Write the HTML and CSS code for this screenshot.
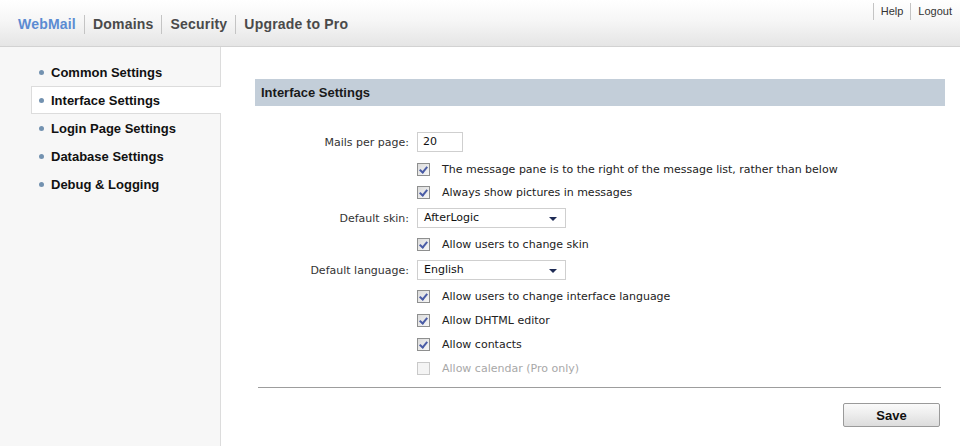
FILE: index.html
```html
<!DOCTYPE html>
<html>
<head>
<meta charset="utf-8">
<link rel="stylesheet" href="styles.css">
</head>
<body>
<header class="header">
  <nav class="mainnav">
    <a class="nav-item active">WebMail</a>
    <a class="nav-item">Domains</a>
    <a class="nav-item">Security</a>
    <a class="nav-item">Upgrade to Pro</a>
  </nav>
  <div class="toplinks">
    <a class="toplink">Help</a>
    <a class="toplink">Logout</a>
  </div>
</header>
<div class="main">
  <aside class="sidebar">
    <ul class="menu">
      <li class="menu-item"><span class="bullet"></span>Common Settings</li>
      <li class="menu-item selected"><span class="bullet"></span>Interface Settings</li>
      <li class="menu-item"><span class="bullet"></span>Login Page Settings</li>
      <li class="menu-item"><span class="bullet"></span>Database Settings</li>
      <li class="menu-item"><span class="bullet"></span>Debug &amp; Logging</li>
    </ul>
  </aside>
  <section class="content">
    <h2 class="section-title">Interface Settings</h2>
    <div class="form">
      <div class="row row-input">
        <label class="label">Mails per page:</label>
        <div class="control"><span class="textbox">20</span></div>
      </div>
      <div class="row row-first">
        <span class="label"></span>
        <div class="control"><span class="cb checked"></span><span class="cb-text">The message pane is to the right of the message list, rather than below</span></div>
      </div>
      <div class="row">
        <span class="label"></span>
        <div class="control"><span class="cb checked"></span><span class="cb-text">Always show pictures in messages</span></div>
      </div>
      <div class="row row-select">
        <label class="label">Default skin:</label>
        <div class="control"><span class="select">AfterLogic<span class="arrow"></span></span></div>
      </div>
      <div class="row">
        <span class="label"></span>
        <div class="control"><span class="cb checked"></span><span class="cb-text">Allow users to change skin</span></div>
      </div>
      <div class="row row-select">
        <label class="label">Default language:</label>
        <div class="control"><span class="select">English<span class="arrow"></span></span></div>
      </div>
      <div class="row">
        <span class="label"></span>
        <div class="control"><span class="cb checked"></span><span class="cb-text">Allow users to change interface language</span></div>
      </div>
      <div class="row">
        <span class="label"></span>
        <div class="control"><span class="cb checked"></span><span class="cb-text">Allow DHTML editor</span></div>
      </div>
      <div class="row">
        <span class="label"></span>
        <div class="control"><span class="cb checked"></span><span class="cb-text">Allow contacts</span></div>
      </div>
      <div class="row disabled">
        <span class="label"></span>
        <div class="control"><span class="cb"></span><span class="cb-text">Allow calendar (Pro only)</span></div>
      </div>
    </div>
    <div class="divider"></div>
    <div class="actions">
      <button class="btn">Save</button>
    </div>
  </section>
</div>
</body>
</html>
```
FILE: styles.css
```css
* { box-sizing: border-box; }
html, body { margin: 0; padding: 0; height: 100%; }
body {
  font-family: "Liberation Sans", Arial, sans-serif;
  font-size: 12px;
  color: #222;
  background: #fff;
  display: flex;
  flex-direction: column;
}
.header {
  height: 47px;
  background: linear-gradient(to bottom, #ffffff 0%, #f6f6f6 45%, #e5e5e5 100%);
  border-bottom: 1px solid #d2d2d2;
  display: flex;
  justify-content: space-between;
  align-items: flex-start;
  flex-shrink: 0;
}
.mainnav {
  display: flex;
  align-items: center;
  padding: 15px 0 0 18px;
}
.nav-item {
  font-weight: bold;
  font-size: 14px;
  color: #4a4a4a;
  line-height: 19px;
  padding: 0 8px;
  letter-spacing: 0.2px;
  border-left: 1px solid #c4c4c4;
}
.nav-item:first-child { padding-left: 0; border-left: none; }
.nav-item.active { color: #5b8bd2; }
.toplinks {
  display: flex;
  padding: 3px 8px 0 0;
}
.toplink {
  font-size: 11px;
  color: #333;
  line-height: 17px;
  padding: 0 0 0 7px;
  margin-left: 1px;
  border-left: 1px solid #c4c4c4;
}
.toplink + .toplink { margin-left: 7px; }
.main {
  flex: 1;
  display: flex;
}
.sidebar {
  width: 221px;
  flex-shrink: 0;
  background: #f7f7f7;
  border-right: 1px solid #dcdcdc;
  padding: 11px 0 0 31px;
}
.menu { list-style: none; margin: 0; padding: 0; }
.menu-item {
  height: 28px;
  display: flex;
  align-items: center;
  padding-left: 7px;
  font-weight: bold;
  font-size: 13px;
  color: #111;
  margin-right: -1px;
  border: 1px solid transparent;
  border-right: none;
}
.menu-item.selected {
  background: #fff;
  border-color: #dcdcdc;
}
.bullet {
  width: 5px;
  height: 5px;
  border-radius: 50%;
  background: #7392b0;
  margin-right: 7px;
}
.content {
  flex: 1;
  padding: 32px 15px 0 34px;
}
.section-title {
  margin: 0;
  height: 27px;
  line-height: 27px;
  background: #c3ced9;
  font-size: 13px;
  font-weight: bold;
  color: #1a1a1a;
  padding-left: 6px;
}
.form {
  margin-top: 20px;
  font-family: "DejaVu Sans", Verdana, sans-serif;
  font-size: 11px;
}
.row {
  display: flex;
  align-items: center;
  height: 24px;
}
.row-input { height: 32px; }
.row-first { height: 22px; }
.row-select { height: 28px; }
.label {
  width: 154px;
  text-align: right;
  color: #333;
  flex-shrink: 0;
}
.control {
  margin-left: 8px;
  display: flex;
  align-items: center;
}
.textbox {
  width: 46px;
  height: 20px;
  border: 1px solid #cfcfcf;
  padding: 0 5px;
  line-height: 18px;
  color: #111;
}
.select {
  position: relative;
  width: 149px;
  height: 20px;
  border: 1px solid #cfcfcf;
  padding: 0 6px;
  line-height: 18px;
  color: #111;
}
.arrow {
  position: absolute;
  right: 8px;
  top: 8px;
  width: 0;
  height: 0;
  border-left: 4px solid transparent;
  border-right: 4px solid transparent;
  border-top: 4px solid #1e2b55;
}
.cb {
  width: 13px;
  height: 13px;
  border: 1px solid #8e8f8f;
  background: linear-gradient(135deg, #dcdcdc 0%, #f6f6f6 100%);
  position: relative;
  flex-shrink: 0;
}
.cb.checked::after {
  content: "";
  position: absolute;
  left: 3px;
  top: 1px;
  width: 3px;
  height: 6px;
  border-right: 2px solid #4a5ca6;
  border-bottom: 2px solid #4a5ca6;
  transform: rotate(40deg);
}
.cb-text { margin-left: 12px; color: #222; }
.disabled .cb { border-color: #c9c9c9; background: #f4f4f4; }
.disabled .cb-text { color: #a8a8a8; }
.divider {
  margin: 7px 4px 0 3px;
  border-top: 1px solid #9d9d9d;
}
.actions {
  display: flex;
  justify-content: flex-end;
  padding: 15px 5px 0 0;
}
.btn {
  width: 97px;
  height: 24px;
  border: 1px solid #9a9a9a;
  border-radius: 2px;
  background: linear-gradient(to bottom, #fafafa 0%, #ececec 50%, #dcdcdc 100%);
  font-family: "Liberation Sans", Arial, sans-serif;
  font-weight: bold;
  font-size: 13px;
  color: #111;
  padding: 0;
}
```
